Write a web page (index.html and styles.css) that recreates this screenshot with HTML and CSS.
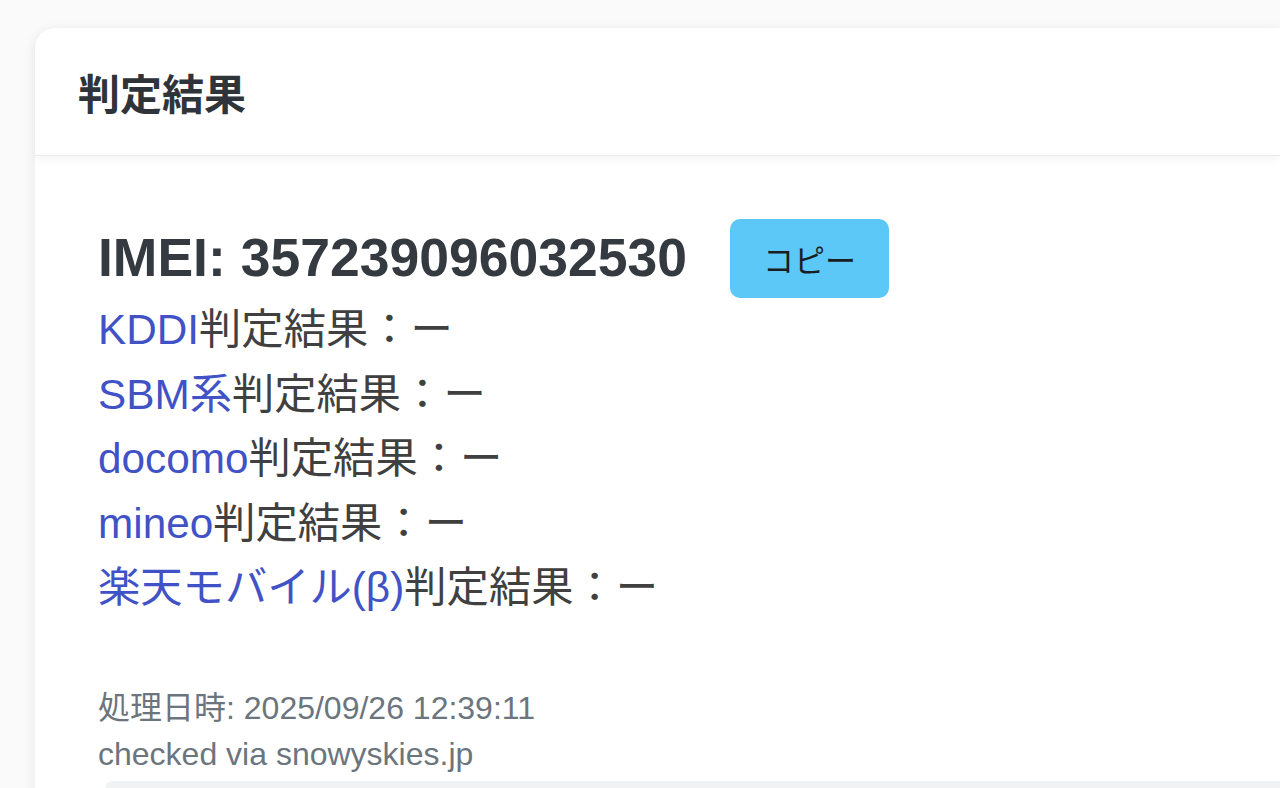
FILE: index.html
```html
<!DOCTYPE html>
<html lang="ja">
<head>
<meta charset="UTF-8" />
<meta name="viewport" content="width=device-width, initial-scale=1" />
<title>判定結果</title>
<link rel="stylesheet" href="styles.css">
</head>
<body>

<div class="card">
  <div class="card-header">判定結果</div>
  <div class="card-body">
    <div class="imei-row">
      <h3 class="imei">IMEI: 357239096032530</h3>
      <button class="copy-btn">コピー</button>
    </div>
    <div class="results">
      <div><a href="#">KDDI</a>判定結果：ー</div>
      <div><a href="#">SBM系</a>判定結果：ー</div>
      <div><a href="#">docomo</a>判定結果：ー</div>
      <div><a href="#">mineo</a>判定結果：ー</div>
      <div><a href="#">楽天モバイル(β)</a>判定結果：ー</div>
    </div>
    <div class="meta">
      <div>処理日時: 2025/09/26 12:39:11</div>
      <div>checked via snowyskies.jp</div>
    </div>
    <div class="next-box"></div>
  </div>
</div>

</body>
</html>
```

FILE: styles.css
```css
body {
  margin: 0;
  padding: 28px 0 0 35px;
  background: #fafafa;
  font-family: "Liberation Sans", "Noto Sans CJK JP", sans-serif;
  overflow: hidden;
  height: 788px;
  box-sizing: border-box;
}
.card {
  width: 1245px;
  background: #fff;
  border-radius: 20px 0 0 0;
  box-shadow: 0 2px 14px rgba(0,0,0,0.07);
}
.card-header {
  height: 128px;
  box-sizing: border-box;
  padding: 0 43px;
  display: flex;
  align-items: center;
  font-size: 42px;
  font-weight: bold;
  color: #2f343a;
  border-bottom: 1px solid #e8eaec;
  box-shadow: 0 4px 8px rgba(0,0,0,0.04);
  border-radius: 20px 0 0 0;
}
.card-body {
  padding: 63px 0 0 63px;
}
.imei-row {
  display: flex;
  align-items: center;
  gap: 43px;
  height: 79px;
}
.imei {
  margin: 0;
  font-size: 53.5px;
  font-weight: bold;
  color: #343a40;
  line-height: 1.2;
}
.copy-btn {
  width: 159px;
  height: 79px;
  border: none;
  border-radius: 10px;
  background: #5bc8f7;
  color: #1a1d21;
  font-family: inherit;
  font-size: 31px;
}
.results {
  font-size: 42.3px;
  line-height: 64.5px;
  color: #404040;
}
.results a {
  color: #4152c6;
  text-decoration: none;
}
.meta {
  margin-top: 64px;
  font-size: 32px;
  line-height: 46px;
  color: #6c757d;
}
.next-box {
  margin: 4px 0 0 7px;
  height: 40px;
  background: #f0f2f4;
  border-radius: 8px 0 0 0;
}
```
